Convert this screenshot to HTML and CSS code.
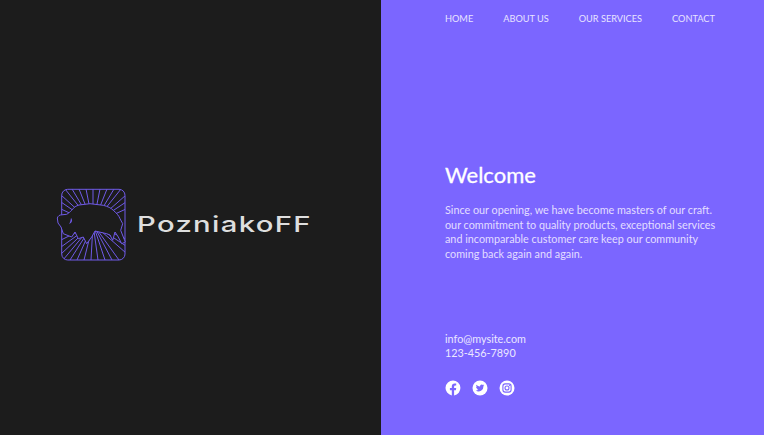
FILE: index.html
```html
<!DOCTYPE html>
<html lang="en">
<head>
<meta charset="utf-8">
<title>PozniakoFF</title>
<link rel="stylesheet" href="styles.css">
</head>
<body>
<main class="page">
  <section class="brand">
    <div class="logo">
      <svg class="logo-mark" width="72" height="75" viewBox="0 0 72 75" aria-hidden="true">
        <defs><clipPath id="box"><rect x="5.7" y="2.300" width="63.300" height="70.700" rx="6"/></clipPath></defs>
        <g clip-path="url(#box)">
          <path class="rays" d="M37 37L9 2M37 37L16 2M37 37L23 2M37 37L30 2M37 37L37 2M37 37L44 2M37 37L51 2M37 37L58 2M37 37L65 2M37 37L70 8M37 37L70 15M37 37L70 22M37 37L70 52M37 37L70 59M37 37L70 66M37 37L63 73M37 37L56 73M37 37L49 73M37 37L42 73M37 37L35 73M37 37L28 73M37 37L21 73M37 37L14 73M37 37L7 73M37 37L5 67M37 37L5 60M37 37L5 53M37 37L5 22M37 37L5 15M37 37L5 8"/>
        </g>
        <rect class="frame" x="5.700" y="2.300" width="63.300" height="70.700" rx="6"/>
        <path class="bison" d="M1.300 31C2 29 3.500 27.800 6 27.800L10.700 27.300C13 26 14.500 24.500 15.700 23.300C18 20 20 19 23 18L34 16.700L47.300 18.300C52 19.500 55 21 57.300 23.300C61 26.500 63 29 64 31.700L66.700 36.700L64.700 43.300L67.300 50L69.300 55L65.700 56.700L62.300 50L59 45L56.700 53.300L54 48L50.700 46.700L39 44L35.700 50L30.700 56.700L27.300 50L22.300 51.700L19 45L15.700 50L7.300 46.700L5 40L2 36Z"/>
        <path class="horn" d="M15 31C17 33 16 36 13 37C14.500 35 14.500 33 15 31Z"/>
      </svg>
      <span class="logo-name">PozniakoFF</span>
    </div>
  </section>
  <section class="panel">
    <nav class="nav">
      <a href="#">HOME</a>
      <a href="#">ABOUT US</a>
      <a href="#">OUR SERVICES</a>
      <a href="#">CONTACT</a>
    </nav>
    <div class="intro">
      <h1>Welcome</h1>
      <p>Since our opening, we have become masters of our craft.<br>our commitment to quality products, exceptional services<br>and incomparable customer care keep our community<br>coming back again and again.</p>
    </div>
    <div class="contact">
      <div>info@mysite.com</div>
      <div>123-456-7890</div>
    </div>
    <div class="social">
      <svg width="16" height="16" viewBox="0 0 16 16" aria-label="Facebook"><path class="icon-fill" d="M8 .5a7.500 7.500 0 0 0-1.200 14.900V10.200H4.900V8h1.900V6.400c0-1.900 1.100-2.900 2.800-2.900.8 0 1.600.1 1.600.1v1.800h-.9c-.9 0-1.200.6-1.200 1.200V8h2.100l-.3 2.200H9.100v5.200A7.500 7.500 0 0 0 8 .5Z"/></svg>
      <svg width="16" height="16" viewBox="0 0 16 16" aria-label="Twitter"><circle class="icon-fill" cx="8" cy="8" r="7.500"/><path class="icon-cut" d="M12.300 5.200c-.3.100-.6.200-1 .3.400-.2.600-.6.800-1-.3.200-.7.300-1.100.4a1.800 1.800 0 0 0-3 1.600A4.900 4.900 0 0 1 4.400 4.700a1.800 1.800 0 0 0 .5 2.300c-.3 0-.6-.1-.8-.2 0 .9.600 1.600 1.400 1.800-.3.100-.5.100-.8 0 .2.700.9 1.200 1.600 1.200A3.600 3.600 0 0 1 3.800 10.600a5 5 0 0 0 7.700-4.500c.3-.2.600-.5.800-.9Z"/></svg>
      <svg width="16" height="16" viewBox="0 0 16 16" aria-label="Instagram"><circle class="icon-fill" cx="8" cy="8" r="7.500"/><rect class="icon-line" x="3.900" y="3.900" width="8.200" height="8.200" rx="2.300"/><circle class="icon-line" cx="8" cy="8" r="2"/><circle class="icon-cut" cx="10.500" cy="5.500" r=".6"/></svg>
    </div>
  </section>
</main>
</body>
</html>
```
FILE: styles.css
```css
* { box-sizing: border-box; }
html, body { margin: 0; height: 100%; }
body { overflow: hidden; font-family: "Lato", "Open Sans", sans-serif; }
.page { display: grid; grid-template-columns: 381px 1fr; height: 435px; }
.brand { background: #1c1c1c; padding: 187px 0 0 56px; }
.logo { display: flex; align-items: flex-start; gap: 9px; }
.logo-mark { display: block; flex: none; }
.rays { fill: none; stroke: #6f5ae6; stroke-width: 1; }
.frame { fill: none; stroke: #6f5ae6; stroke-width: 1; }
.bison { fill: #1c1c1c; stroke: #6f5ae6; stroke-width: 1; stroke-linejoin: round; }
.horn { fill: #6f5ae6; }
.logo-name { margin-top: 23px; font-family: "Inter", sans-serif; font-size: 22px; font-weight: 500; line-height: 28px; letter-spacing: 1px; color: #dedede; transform: scaleX(1.33); transform-origin: left center; white-space: nowrap; }
.panel { background: #7b66ff; padding: 0 0 0 64px; color: #fff; }
.nav { display: flex; gap: 30px; padding-top: 13px; font-size: 9.200px; line-height: 12px; font-weight: 400; }
.nav a { color: #e8e4ff; text-decoration: none; }
.intro { margin-top: 136px; }
h1 { margin: 0; font-size: 22px; line-height: 28px; font-weight: 400; color: #fff; -webkit-text-stroke: .3px #fff; }
.intro p { margin: 14px 0 0; font-size: 10.800px; line-height: 14.500px; font-weight: 400; color: #e3deff; white-space: nowrap; }
.contact { margin-top: 71px; font-size: 10.800px; line-height: 14px; font-weight: 400; color: #ebe8ff; }
.social { display: flex; gap: 11px; margin-top: 20px; }
.icon-fill { fill: #fff; }
.icon-cut { fill: #7b66ff; }
.icon-line { fill: none; stroke: #7b66ff; stroke-width: 1.100; }
```
